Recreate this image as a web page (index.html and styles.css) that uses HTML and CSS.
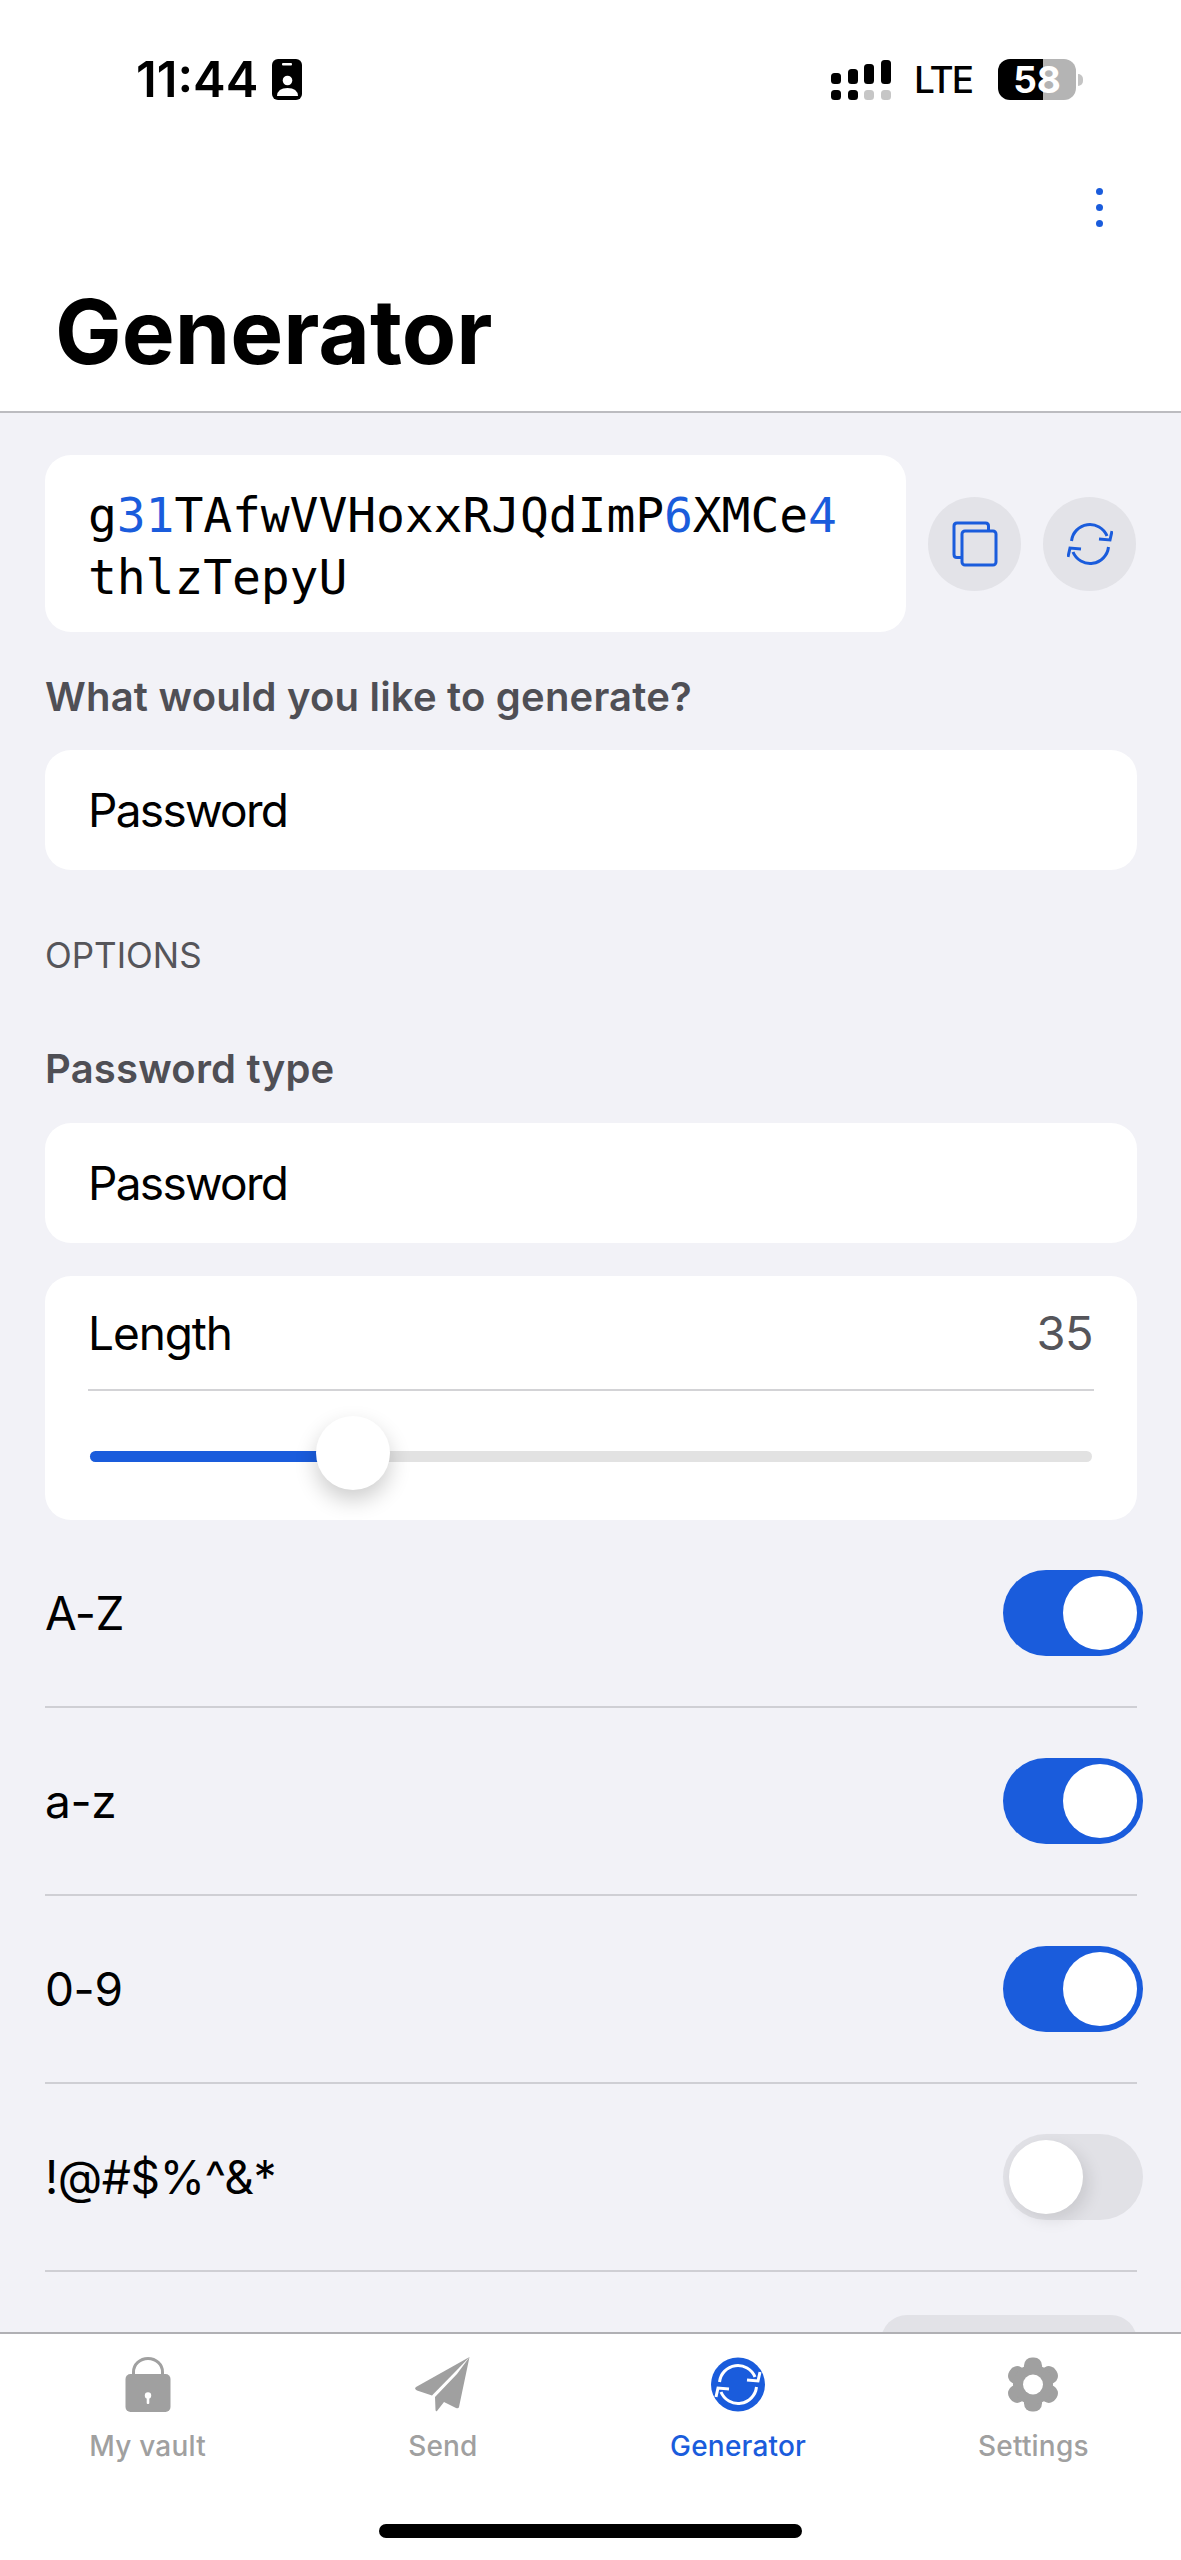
FILE: index.html
```html
<!DOCTYPE html>
<html lang="en">
<head>
  <meta charset="UTF-8">
  <title>Generator</title>
  <link rel="stylesheet" href="styles.css">
</head>
<body>
  <div class="screen">
    <header class="top">
      <div class="status">
        <div class="status-left">
          <span class="clock">11:44</span>
          <svg class="badge" viewBox="0 0 30 41">
            <rect width="30" height="41" rx="6" fill="#000"/>
            <rect x="10" y="4" width="10" height="2.5" rx="1" fill="#fff"/>
            <circle cx="15.5" cy="21.5" r="4.8" fill="#fff"/>
            <path d="M5 37Q5.500 29 15.500 29T26 37Z" fill="#fff"/>
          </svg>
        </div>
        <div class="status-right">
          <svg class="signal" viewBox="0 0 60 41">
            <rect x="0" y="14" width="10" height="11" rx="3.500"/>
            <rect x="17" y="10" width="10" height="15" rx="3.500"/>
            <rect x="33" y="5" width="10" height="20" rx="3.500"/>
            <rect x="50" y="1" width="10" height="24" rx="3.500"/>
            <rect x="0" y="31" width="10" height="10" rx="3.500"/>
            <rect x="17" y="31" width="10" height="10" rx="3.500"/>
            <rect x="33" y="31" width="10" height="10" rx="3.500" fill="#c6c6c6"/>
            <rect x="50" y="31" width="10" height="10" rx="3.500" fill="#c6c6c6"/>
          </svg>
          <span class="net">LTE</span>
          <div class="battery"><span>58</span></div>
          <span class="battery-nub"></span>
        </div>
      </div>
      <div class="toolbar">
        <div class="more"><i></i><i></i><i></i></div>
      </div>
      <h1>Generator</h1>
    </header>

    <main class="content">
      <div class="generated">
        <div class="card password-value">g<b>31</b>TAfwVVHoxxRJQdImP<b>6</b>XMCe<b>4</b>thlzTepyU</div>
        <button class="round-btn">
          <svg width="46" height="46" viewBox="0 0 46 46" fill="none" stroke="#1a5cdc" stroke-width="3">
            <path d="M9 36.500H5Q2 36.500 2 33.500V5Q2 2 5 2H33.500Q36.500 2 36.500 5V9"/>
            <rect x="10" y="10" width="34" height="34" rx="3"/>
          </svg>
        </button>
        <button class="round-btn">
          <svg width="46" height="42" viewBox="0 0 46 42" fill="none" stroke="#1a5cdc" stroke-width="3">
            <path d="M4.500 18A18.500 18.500 0 0 1 40 13"/>
            <path d="M32 16L43 17L45 8"/>
            <g transform="rotate(180 23 21)">
              <path d="M4.500 18A18.500 18.500 0 0 1 40 13"/>
              <path d="M32 16L43 17L45 8"/>
            </g>
          </svg>
        </button>
      </div>

      <div class="field-label first">What would you like to generate?</div>
      <div class="card select">Password</div>

      <div class="section-title">OPTIONS</div>

      <div class="field-label type">Password type</div>
      <div class="card select">Password</div>

      <div class="card length-card">
        <div class="length-row">
          <span>Length</span>
          <span class="length-value">35</span>
        </div>
        <div class="slider">
          <div class="slider-fill" style="width: 26.3%"></div>
          <div class="slider-knob"></div>
        </div>
      </div>

      <div class="toggle-row">
        <span>A-Z</span>
        <div class="toggle on"><i></i></div>
      </div>
      <div class="toggle-row">
        <span>a-z</span>
        <div class="toggle on"><i></i></div>
      </div>
      <div class="toggle-row">
        <span>0-9</span>
        <div class="toggle on"><i></i></div>
      </div>
      <div class="toggle-row">
        <span>!@#$%^&amp;*</span>
        <div class="toggle"><i></i></div>
      </div>

      <div class="next-row">
        <button class="small-btn"></button>
      </div>
    </main>

    <nav class="tabs">
      <div class="tab">
        <svg width="46" height="55" viewBox="0 0 46 55">
          <path d="M8.500 19V15A14.500 13.500 0 0 1 37.500 15V19" fill="none" stroke="#a0a0a0" stroke-width="3"/>
          <rect x="0.500" y="17" width="45" height="38" rx="5" fill="#a0a0a0"/>
          <circle cx="23" cy="38.500" r="3.200" fill="#fff"/>
          <rect x="21.700" y="39" width="2.600" height="8" rx="1" fill="#fff"/>
        </svg>
        <span>My vault</span>
      </div>
      <div class="tab">
        <svg width="55" height="55" viewBox="0 0 55 55" fill="#a0a0a0">
          <path d="M54.500 0L1 30Q-1 32 2 33.500L17 38.500L40 15Z"/>
          <path d="M54.500 0L44 50Q43.500 52 41 51L29 45L22 54Q21 55 20.500 53L20 40L42 17Z"/>
        </svg>
        <span>Send</span>
      </div>
      <div class="tab active">
        <svg width="54" height="55" viewBox="0 0 54 55">
          <circle cx="27" cy="27.500" r="27" fill="#1a5cdc"/>
          <g fill="none" stroke="#fff" stroke-width="3">
            <path d="M8.500 25A18.500 18.500 0 0 1 44 20"/>
            <path d="M36 23L47 24L49 15"/>
            <g transform="rotate(180 27 27.500)">
              <path d="M8.500 25A18.500 18.500 0 0 1 44 20"/>
              <path d="M36 23L47 24L49 15"/>
            </g>
          </g>
        </svg>
        <span>Generator</span>
      </div>
      <div class="tab">
        <svg width="54" height="55" viewBox="0 0 54 55" fill="#a0a0a0">
          <rect x="18" y="0.500" width="18" height="54" rx="8"/>
          <rect x="18" y="0.500" width="18" height="54" rx="8" transform="rotate(60 27 27.500)"/>
          <rect x="18" y="0.500" width="18" height="54" rx="8" transform="rotate(120 27 27.500)"/>
          <circle cx="27" cy="27.500" r="20"/>
          <circle cx="27" cy="27.500" r="10" fill="#fff"/>
        </svg>
        <span>Settings</span>
      </div>
    </nav>

    <div class="home-bar"><span></span></div>
  </div>
</body>
</html>
```

FILE: styles.css
```css
* {
  box-sizing: border-box;
}
body {
  margin: 0;
  background-color: #f2f2f7;
  color: #000;
  font-family: Inter, "Liberation Sans", sans-serif;
}
.screen {
  display: flex;
  flex-direction: column;
  height: 2560px;
  overflow: hidden;
}

/* top area */
.top {
  flex: none;
  height: 413px;
  background-color: #fff;
  border-bottom: 2px solid #bcbcc0;
}
.status {
  display: flex;
  justify-content: space-between;
  align-items: center;
  height: 43px;
  margin-top: 58px;
  padding: 0 98px 0 136px;
}
.status-left {
  display: flex;
  align-items: center;
  gap: 14px;
}
.clock {
  font-size: 49px;
  font-weight: 600;
  line-height: 43px;
}
.badge {
  width: 30px;
  height: 41px;
}
.status-right {
  display: flex;
  align-items: center;
}
.signal {
  width: 60px;
  height: 41px;
}
.net {
  margin-left: 23px;
  font-size: 37px;
  font-weight: 500;
  letter-spacing: -2px;
  line-height: 41px;
}
.battery {
  width: 78px;
  height: 41px;
  margin-left: 26px;
  border-radius: 12px;
  background: linear-gradient(to right, #000 58%, #b4b4b4 58%);
  color: #fff;
  font-size: 37px;
  font-weight: 700;
  line-height: 41px;
  text-align: center;
}
.battery-nub {
  width: 5px;
  height: 12px;
  margin-left: 2px;
  border-radius: 0 5px 5px 0;
  background-color: #c4c4c4;
}
.toolbar {
  display: flex;
  justify-content: flex-end;
  margin-top: 87px;
  padding-right: 78px;
}
.more {
  display: flex;
  flex-direction: column;
  gap: 9px;
}
.more i {
  display: block;
  width: 7px;
  height: 7px;
  border-radius: 50%;
  background-color: #1a5cdc;
}
h1 {
  margin: 55px 0 0;
  padding-left: 55px;
  font-size: 89px;
  font-weight: 700;
  line-height: 100px;
}

/* scrolling part */
.content {
  flex: 1;
  min-height: 0;
  overflow: hidden;
  padding: 42px 44px 0 45px;
}
.card {
  background-color: #fff;
  border-radius: 26px;
}
.generated {
  display: flex;
  align-items: center;
  gap: 22px;
}
.password-value {
  width: 861px;
  height: 177px;
  padding: 29px 43px;
  font-family: "DejaVu Sans Mono", "Liberation Mono", monospace;
  font-size: 48px;
  letter-spacing: -0.1px;
  line-height: 62px;
  word-break: break-all;
}
.password-value b {
  color: #1a5cdc;
  font-weight: 400;
}
.round-btn {
  display: flex;
  align-items: center;
  justify-content: center;
  flex: none;
  width: 93px;
  height: 94px;
  padding: 0;
  border: none;
  border-radius: 50%;
  background-color: #e3e3e8;
}
.field-label {
  color: #4f4f55;
  font-size: 40px;
  font-weight: 600;
  letter-spacing: 0.2px;
  line-height: 48px;
}
.field-label.first {
  margin: 41px 0 29px;
}
.field-label.type {
  margin: 69px 0 30px;
}
.select {
  height: 120px;
  padding: 0 43px;
  font-size: 46px;
  letter-spacing: -1.7px;
  line-height: 120px;
}
.section-title {
  margin-top: 64px;
  color: #55555a;
  font-size: 35px;
  line-height: 42px;
}
.length-card {
  height: 244px;
  margin-top: 33px;
  padding: 0 43px;
}
.length-row {
  display: flex;
  justify-content: space-between;
  align-items: center;
  height: 115px;
  border-bottom: 2px solid #d3d3d6;
  font-size: 46px;
  letter-spacing: -1.1px;
}
.length-value {
  color: #55555a;
  font-size: 47px;
  letter-spacing: -0.5px;
  padding-right: 1px;
}
.slider {
  position: relative;
  height: 11px;
  margin: 60px 2px 0;
  border-radius: 6px;
  background-color: #e2e2e2;
}
.slider-fill {
  height: 100%;
  border-radius: 6px 0 0 6px;
  background-color: #1a5cdc;
}
.slider-knob {
  position: absolute;
  left: 226px;
  top: -35px;
  width: 74px;
  height: 74px;
  border-radius: 50%;
  background-color: #fff;
  box-shadow: 0 10px 22px rgba(0, 0, 0, 0.2);
}

/* toggles */
.toggle-row {
  display: flex;
  justify-content: space-between;
  align-items: center;
  height: 188px;
  border-bottom: 2px solid #cfcfd4;
  font-size: 46px;
  letter-spacing: -0.4px;
}
.toggle {
  display: flex;
  align-items: center;
  width: 140px;
  height: 86px;
  margin-right: -6px;
  padding: 0 6px;
  border-radius: 43px;
  background-color: #e1e1e6;
}
.toggle i {
  display: block;
  width: 74px;
  height: 74px;
  border-radius: 50%;
  background-color: #fff;
  box-shadow: 6px 6px 16px rgba(0, 0, 0, 0.1);
}
.toggle.on {
  justify-content: flex-end;
  background-color: #1a5cdc;
}
.toggle.on i {
  box-shadow: none;
}
.next-row {
  display: flex;
  justify-content: flex-end;
  padding-top: 43px;
}
.small-btn {
  width: 256px;
  height: 80px;
  border: none;
  border-radius: 26px;
  background-color: #e2e2e7;
}

/* bottom tabs */
.tabs {
  flex: none;
  display: flex;
  height: 166px;
  padding-top: 23px;
  background-color: #fff;
  border-top: 2px solid #b0b0b4;
}
.tab {
  flex: 1;
  display: flex;
  flex-direction: column;
  align-items: center;
  color: #a0a0a0;
  font-size: 28px;
  font-weight: 500;
  letter-spacing: 0.2px;
}
.tab span {
  margin-top: 16px;
  line-height: 36px;
}
.tab.active {
  color: #1a5cdc;
}
.home-bar {
  flex: none;
  height: 62px;
  background-color: #fff;
  display: flex;
  justify-content: center;
  padding-top: 26px;
}
.home-bar span {
  width: 423px;
  height: 14px;
  border-radius: 7px;
  background-color: #000;
}
```
